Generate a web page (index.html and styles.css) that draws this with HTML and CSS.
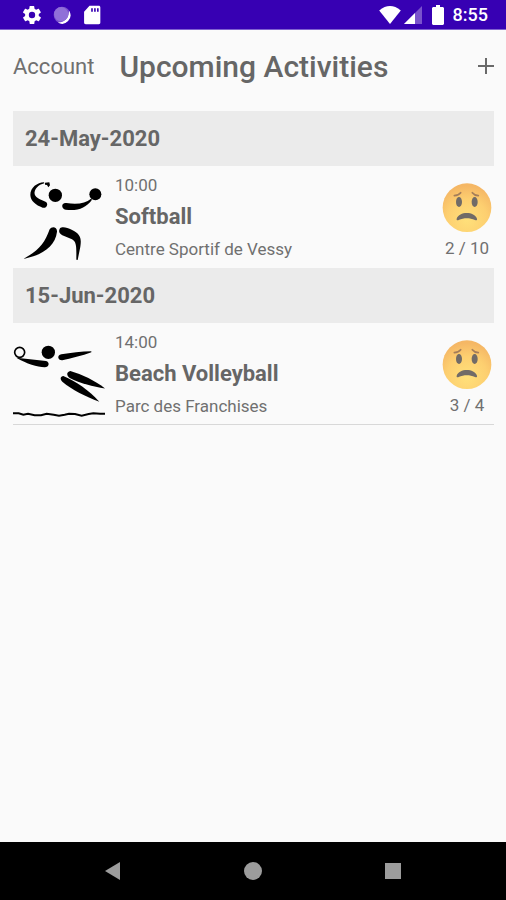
FILE: index.html
```html
<!DOCTYPE html>
<html lang="en">
<head>
    <meta charset="UTF-8">
    <title>Upcoming Activities</title>
    <meta name="viewport" content="width=device-width, initial-scale=1">
    <link rel="stylesheet" href="styles.css">
</head>
<body>
<div class="status-bar">
    <div class="status-left">
        <svg class="status-icon" viewBox="1 1 22 22" fill="#fff" fill-rule="evenodd"><path d="M19.4 13c0-.3.1-.6.1-1s0-.7-.1-1l2.1-1.600c.2-.2.3-.5.1-.7l-2-3.400c-.1-.2-.4-.3-.6-.2l-2.500 1c-.5-.4-1.100-.7-1.700-1l-.4-2.600c0-.3-.2-.5-.5-.5h-4c-.3 0-.5.2-.5.4L9 5.100c-.6.200-1.200.600-1.700 1l-2.500-1c-.2-.1-.5 0-.6.200l-2 3.400c-.1.200-.1.500.1.700L4.500 11c0 .3-.1.600-.1 1s0 .700.100 1l-2.100 1.600c-.2.200-.3.500-.1.700l2 3.400c.1.200.4.300.6.200l2.500-1c.5.400 1.100.7 1.700 1l.4 2.600c0 .300.2.500.5.500h4c.3 0 .5-.2.5-.4l.4-2.700c.6-.2 1.200-.6 1.700-1l2.500 1c.2.100.5 0 .6-.2l2-3.400c.1-.2.1-.5-.1-.7zM12 15.500a3.500 3.500 0 1 1 0-7 3.500 3.500 0 0 1 0 7z"/></svg>
        <svg class="status-icon" viewBox="0 0 24 24"><circle cx="12" cy="12" r="10" fill="#7a4fce"/><path d="M20.500 7A10 10 0 0 1 7 21c5 0 7-1 9.500-3.500S20 13 20.500 7z" fill="#fff"/><circle cx="11" cy="11" r="8.500" fill="#9070d8"/></svg>
        <svg class="status-icon" viewBox="0 0 24 24" fill="#fff" fill-rule="evenodd"><path d="M20 1H9L2.500 8v13c0 1.300.7 2 2 2H20c1.300 0 2-.7 2-2V3c0-1.300-.7-2-2-2zM11 4h2v4h-2zm3.500 0h2v4h-2zM18 4h2v4h-2z"/></svg>
    </div>
    <div class="status-right">
        <svg class="wifi-icon" viewBox="0 0 24 20" fill="#fff"><path d="M12 20L0 5C4 1.500 8 0 12 0s8 1.500 12 5z"/></svg>
        <svg class="signal-icon" viewBox="0 0 18 18"><path d="M18 0v18H0z" fill="#7a52cc"/><path d="M11 7v11H0z" fill="#fff"/></svg>
        <svg class="battery-icon" viewBox="0 0 12 20" fill="#fff"><path d="M4 0h4v2h3l1 1v16l-1 1H1l-1-1V3l1-1h3z"/></svg>
        <span class="clock">8:55</span>
    </div>
</div>

<header class="header">
    <a class="account" href="#account">Account</a>
    <h1 class="title">Upcoming Activities</h1>
    <button class="add" type="button" aria-label="Add activity">
        <svg class="add-icon" viewBox="0 0 16 16" stroke="#696969" stroke-width="2"><path d="M8 0v16M0 8h16"/></svg>
    </button>
</header>

<main class="activities">
    <h2 class="date">24-May-2020</h2>
    <div class="activity">
        <svg class="sport" viewBox="39 15 276 276">
            <circle cx="166" cy="88" r="20"/>
            <circle cx="286" cy="85" r="18"/>
            <path d="M132 49C112 50 91 64 91 87c1 18 16 30 37 38 12 3 18-11 10-17-12-6-30-10-34-23-3-14 11-29 29-33z"/>
            <path d="M135 50l13-1 2 9-5 6-4-7-6-1z"/>
            <path d="M273 98c-17 14-40 18-74 13-16-2-16 17-2 20 35 5 61-5 79-30z"/>
            <path d="M149 190c6-10 23-8 22 7-4 37-33 61-71 74l-29 8 5-4c42-22 59-46 73-85z"/>
            <path d="M180 187c7-7 22-2 35 4 26 12 30 25 26 51l-8 40-4-1c0-34 2-53-13-61l-29-12c-10-5-12-13-7-21z"/>
        </svg>
        <div class="details">
            <span class="small">10:00</span>
            <h3 class="name">Softball</h3>
            <span class="small">Centre Sportif de Vessy</span>
        </div>
        <div class="players">
            <svg class="face" viewBox="36 39 150 150">
                <defs>
                    <radialGradient id="skin" cx="50%" cy="75%" r="70%">
                        <stop offset="0" stop-color="#ffe07a"/>
                        <stop offset="0.600" stop-color="#fdcf70"/>
                        <stop offset="1" stop-color="#f5b765"/>
                    </radialGradient>
                </defs>
                <circle cx="111" cy="113" r="73" fill="url(#skin)"/>
                <g fill="#716b67">
                    <ellipse cx="87" cy="96" rx="9" ry="15"/>
                    <ellipse cx="134" cy="96" rx="9" ry="15"/>
                    <path d="M80 146c4-11 17-17 30-17 14 0 27 6 31 17 1 4-2 6-6 4-16-7-33-7-49 0-4 2-7 0-6-4z"/>
                </g>
                <path d="M73 77q13-1 19-9M127 68q6 8 18 9" fill="none" stroke="#a57d59" stroke-width="5" stroke-linecap="round"/>
            </svg>
            <span class="small">2 / 10</span>
        </div>
    </div>

    <h2 class="date">15-Jun-2020</h2>
    <div class="activity last">
        <svg class="sport" viewBox="39 6 276 276">
            <circle cx="145" cy="79" r="20"/>
            <circle cx="59" cy="79" r="15" fill="none" stroke="#000" stroke-width="5"/>
            <path d="M49 95l89 10c12 3 10 19-4 19-23-2-53-10-85-29z"/>
            <path d="M274 76v3c-27 10-62 19-87 24-14 1-17-15-3-18 28-4 61-9 90-9z"/>
            <path d="M211 135c35 10 76 30 105 53-37-7-74-15-107-32-11-8-9-19 2-21z"/>
            <path d="M190 150c39 17 76 42 108 77-43-16-79-34-111-60-8-8-6-16 3-17z"/>
            <path d="M39 262h17l14 4 14-3 20 5h19l17-5 21 3 16 3 17-3 13-3 18 1 20 5 21-5 14-2 20 1h15" fill="none" stroke="#000" stroke-width="6"/>
        </svg>
        <div class="details">
            <span class="small">14:00</span>
            <h3 class="name">Beach Volleyball</h3>
            <span class="small">Parc des Franchises</span>
        </div>
        <div class="players">
            <svg class="face" viewBox="36 39 150 150">
                <circle cx="111" cy="113" r="73" fill="url(#skin)"/>
                <g fill="#716b67">
                    <ellipse cx="87" cy="96" rx="9" ry="15"/>
                    <ellipse cx="134" cy="96" rx="9" ry="15"/>
                    <path d="M80 146c4-11 17-17 30-17 14 0 27 6 31 17 1 4-2 6-6 4-16-7-33-7-49 0-4 2-7 0-6-4z"/>
                </g>
                <path d="M73 77q13-1 19-9M127 68q6 8 18 9" fill="none" stroke="#a57d59" stroke-width="5" stroke-linecap="round"/>
            </svg>
            <span class="small">3 / 4</span>
        </div>
    </div>
</main>

<nav class="nav-bar">
    <button class="nav-button" type="button" aria-label="Back">
        <svg class="nav-icon" viewBox="0 0 18 18" fill="#9c9c9c"><path d="M1 9L16 0v18z"/></svg>
    </button>
    <button class="nav-button" type="button" aria-label="Home">
        <svg class="nav-icon" viewBox="0 0 18 18" fill="#9c9c9c"><circle cx="9" cy="9" r="9"/></svg>
    </button>
    <button class="nav-button" type="button" aria-label="Recent apps">
        <svg class="nav-icon" viewBox="0 0 18 18" fill="#9c9c9c"><path d="M1 1h16v16H1z"/></svg>
    </button>
</nav>
</body>
</html>
```
FILE: styles.css
```css
* {
    box-sizing: border-box;
}
body {
    margin: 0;
    min-height: 100vh;
    display: flex;
    flex-direction: column;
    background-color: #fafafa;
    color: #666;
    font-family: Roboto, "Liberation Sans", sans-serif;
}
h1, h2, h3 {
    margin: 0;
}
svg {
    display: block;
    flex: none;
}
button {
    border: none;
    padding: 0;
    background: none;
    cursor: pointer;
}
.status-bar {
    height: 30px;
    padding: 0 18px 0 22px;
    display: flex;
    justify-content: space-between;
    align-items: center;
    background-color: #3700b3;
    border-bottom: 1px solid #8062cf;
}
.status-left {
    display: flex;
    gap: 10px;
}
.status-right {
    display: flex;
    align-items: center;
}
.status-icon {
    width: 20px;
    height: 20px;
}
.wifi-icon {
    width: 22px;
    height: 18px;
    margin-right: 3px;
}
.signal-icon {
    width: 18px;
    height: 18px;
    margin-right: 10px;
}
.battery-icon {
    width: 12px;
    height: 20px;
    margin-right: 9px;
}
.clock {
    color: #fff;
    font-size: 18px;
    font-weight: 500;
}
.header {
    height: 81px;
    padding: 0 12px 9px 13px;
    display: flex;
    align-items: center;
}
.account {
    color: #707070;
    font-size: 22px;
    text-decoration: none;
}
.title {
    margin-left: 25px;
    font-size: 30px;
    font-weight: 500;
}
.add {
    margin-left: auto;
}
.add-icon {
    width: 16px;
    height: 16px;
}
.activities {
    flex: 1;
    padding: 0 12px 0 13px;
}
.date {
    padding: 0 12px;
    background-color: #ebebeb;
    font-size: 22px;
    font-weight: 700;
    line-height: 55px;
}
.activity {
    display: flex;
    align-items: center;
    height: 102px;
}
.last {
    border-bottom: 1px solid #d8d8d8;
}
.sport {
    width: 92px;
    height: 92px;
}
.details {
    flex: 1;
    margin-left: 10px;
}
.small {
    display: block;
    color: #707070;
    font-size: 17px;
    line-height: 30px;
}
.name {
    font-size: 22px;
    font-weight: 700;
    line-height: 34px;
}
.players {
    width: 54px;
    padding-top: 12px;
    display: flex;
    flex-direction: column;
    align-items: center;
}
.face {
    width: 50px;
    height: 50px;
}
.nav-bar {
    height: 58px;
    padding: 0 43px;
    display: flex;
    background-color: #000;
}
.nav-button {
    flex: 1;
    display: flex;
    align-items: center;
    justify-content: center;
}
.nav-icon {
    width: 18px;
    height: 18px;
}
```
